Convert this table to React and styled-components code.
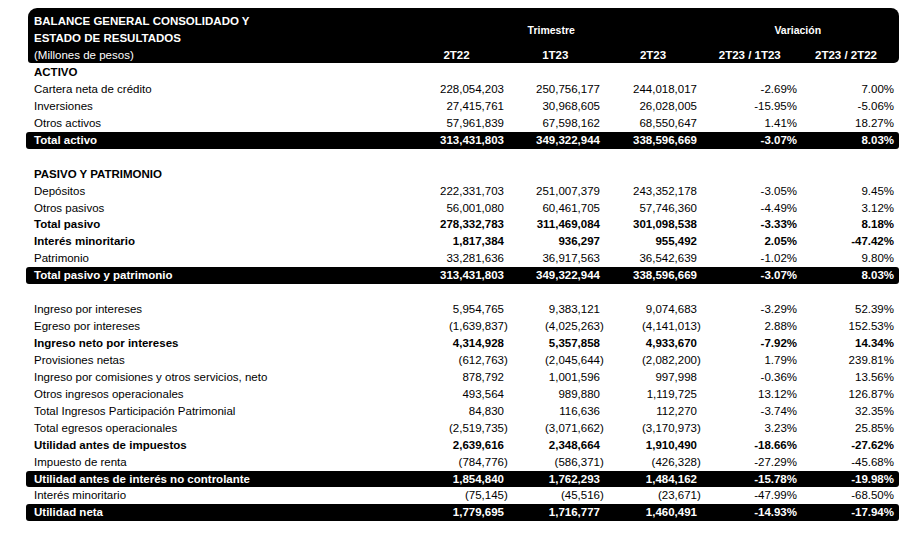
import React from "react";
import styled, { createGlobalStyle } from "styled-components";

const GlobalStyle = createGlobalStyle`
  html, body {
    margin: 0;
    padding: 0;
    background: #ffffff;
  }
  body {
    font-family: "Liberation Sans", Arial, sans-serif;
    color: #000000;
    -webkit-font-smoothing: antialiased;
  }
`;

const Sheet = styled.div`
  width: 873px;
  padding: 8px 0 0 26px;
  font-family: "Liberation Sans", Arial, sans-serif;
  font-size: 11.5px;
`;

const Header = styled.div`
  margin-left: 2px;
  background: #000000;
  color: #ffffff;
  border-radius: 9px 8px 5px 3px;
  display: grid;
  grid-template-columns: 1fr 99px 98.5px 97px 96.5px 96px;
  grid-template-rows: 17px 17px 16px;
  padding: 4.5px 5px 0.5px 0;
  font-weight: bold;
  line-height: 17px;
`;

const TitleLine = styled.div`
  grid-column: 1;
  grid-row: ${(p) => p.$row};
  padding-left: 6px;
  white-space: nowrap;
  font-weight: ${(p) => (p.$light ? "normal" : "bold")};
  line-height: ${(p) => (p.$row === 3 ? "16px" : "17px")};
`;

const GroupHead = styled.div`
  grid-column: ${(p) => p.$cols};
  grid-row: 1 / 3;
  align-self: center;
  text-align: center;
  font-size: 10.5px;
  padding-top: 2px;
  padding-right: ${(p) => p.$shift || 0}px;
`;

const ColHead = styled.div`
  grid-row: 3;
  text-align: center;
  white-space: nowrap;
  line-height: 16px;
`;

const Body = styled.div`
  margin-top: 1px;
  display: flex;
  flex-direction: column;
`;

const Row = styled.div`
  display: grid;
  grid-template-columns: 1fr 96px 96px 97px 100px 97px;
  height: 16.95px;
  line-height: 16.95px;
  border-radius: 3px;
  background: ${(p) => (p.$dark ? "#000000" : "transparent")};
  color: ${(p) => (p.$dark ? "#ffffff" : "#000000")};
  font-weight: ${(p) => (p.$bold ? "bold" : "normal")};
`;

const Label = styled.div`
  padding-left: 8px;
  white-space: nowrap;
`;

const Num = styled.div`
  text-align: right;
  padding-right: 5px;
  white-space: nowrap;
`;

const Close = styled.span`
  margin-right: -3.83px;
`;

const rows = [
  { t: "section", label: "ACTIVO" },
  { label: "Cartera neta de crédito", v: ["228,054,203", "250,756,177", "244,018,017", "-2.69%", "7.00%"] },
  { label: "Inversiones", v: ["27,415,761", "30,968,605", "26,028,005", "-15.95%", "-5.06%"] },
  { label: "Otros activos", v: ["57,961,839", "67,598,162", "68,550,647", "1.41%", "18.27%"] },
  { t: "total", label: "Total activo", v: ["313,431,803", "349,322,944", "338,596,669", "-3.07%", "8.03%"] },
  { t: "spacer" },
  { t: "section", label: "PASIVO Y PATRIMONIO" },
  { label: "Depósitos", v: ["222,331,703", "251,007,379", "243,352,178", "-3.05%", "9.45%"] },
  { label: "Otros pasivos", v: ["56,001,080", "60,461,705", "57,746,360", "-4.49%", "3.12%"] },
  { t: "bold", label: "Total pasivo", v: ["278,332,783", "311,469,084", "301,098,538", "-3.33%", "8.18%"] },
  { t: "bold", label: "Interés minoritario", v: ["1,817,384", "936,297", "955,492", "2.05%", "-47.42%"] },
  { label: "Patrimonio", v: ["33,281,636", "36,917,563", "36,542,639", "-1.02%", "9.80%"] },
  { t: "total", label: "Total pasivo y patrimonio", v: ["313,431,803", "349,322,944", "338,596,669", "-3.07%", "8.03%"] },
  { t: "spacer" },
  { label: "Ingreso por intereses", v: ["5,954,765", "9,383,121", "9,074,683", "-3.29%", "52.39%"] },
  { label: "Egreso por intereses", v: ["(1,639,837)", "(4,025,263)", "(4,141,013)", "2.88%", "152.53%"] },
  { t: "bold", label: "Ingreso neto por intereses", v: ["4,314,928", "5,357,858", "4,933,670", "-7.92%", "14.34%"] },
  { label: "Provisiones netas", v: ["(612,763)", "(2,045,644)", "(2,082,200)", "1.79%", "239.81%"] },
  { label: "Ingreso por comisiones y otros servicios, neto", v: ["878,792", "1,001,596", "997,998", "-0.36%", "13.56%"] },
  { label: "Otros ingresos operacionales", v: ["493,564", "989,880", "1,119,725", "13.12%", "126.87%"] },
  { label: "Total Ingresos Participación Patrimonial", v: ["84,830", "116,636", "112,270", "-3.74%", "32.35%"] },
  { label: "Total egresos operacionales", v: ["(2,519,735)", "(3,071,662)", "(3,170,973)", "3.23%", "25.85%"] },
  { t: "bold", label: "Utilidad antes de impuestos", v: ["2,639,616", "2,348,664", "1,910,490", "-18.66%", "-27.62%"] },
  { label: "Impuesto de renta", v: ["(784,776)", "(586,371)", "(426,328)", "-27.29%", "-45.68%"] },
  { t: "total", label: "Utilidad antes de interés no controlante", v: ["1,854,840", "1,762,293", "1,484,162", "-15.78%", "-19.98%"] },
  { label: "Interés minoritario", v: ["(75,145)", "(45,516)", "(23,671)", "-47.99%", "-68.50%"] },
  { t: "total", label: "Utilidad neta", v: ["1,779,695", "1,716,777", "1,460,491", "-14.93%", "-17.94%"] },
];

function Value({ v }) {
  if (v.startsWith("(")) {
    return (
      <Num>
        {v.slice(0, -1)}
        <Close>)</Close>
      </Num>
    );
  }
  return <Num>{v}</Num>;
}

export default function App() {
  return (
    <>
      <GlobalStyle />
      <Sheet>
        <Header>
          <TitleLine $row={1}>BALANCE GENERAL CONSOLIDADO Y</TitleLine>
          <TitleLine $row={2}>ESTADO DE RESULTADOS</TitleLine>
          <TitleLine $row={3} $light>(Millones de pesos)</TitleLine>
          <GroupHead $cols="2 / 5" $shift={6}>Trimestre</GroupHead>
          <GroupHead $cols="5 / 7">Variación</GroupHead>
          <ColHead>2T22</ColHead>
          <ColHead>1T23</ColHead>
          <ColHead>2T23</ColHead>
          <ColHead>2T23 / 1T23</ColHead>
          <ColHead>2T23 / 2T22</ColHead>
        </Header>
        <Body>
          {rows.map((r, i) => {
            if (r.t === "spacer") return <Row key={i} />;
            if (r.t === "section")
              return (
                <Row key={i} $bold>
                  <Label>{r.label}</Label>
                </Row>
              );
            const dark = r.t === "total";
            return (
              <Row key={i} $dark={dark} $bold={dark || r.t === "bold"}>
                <Label>{r.label}</Label>
                {r.v.map((v, j) => (
                  <Value key={j} v={v} />
                ))}
              </Row>
            );
          })}
        </Body>
      </Sheet>
    </>
  );
}
